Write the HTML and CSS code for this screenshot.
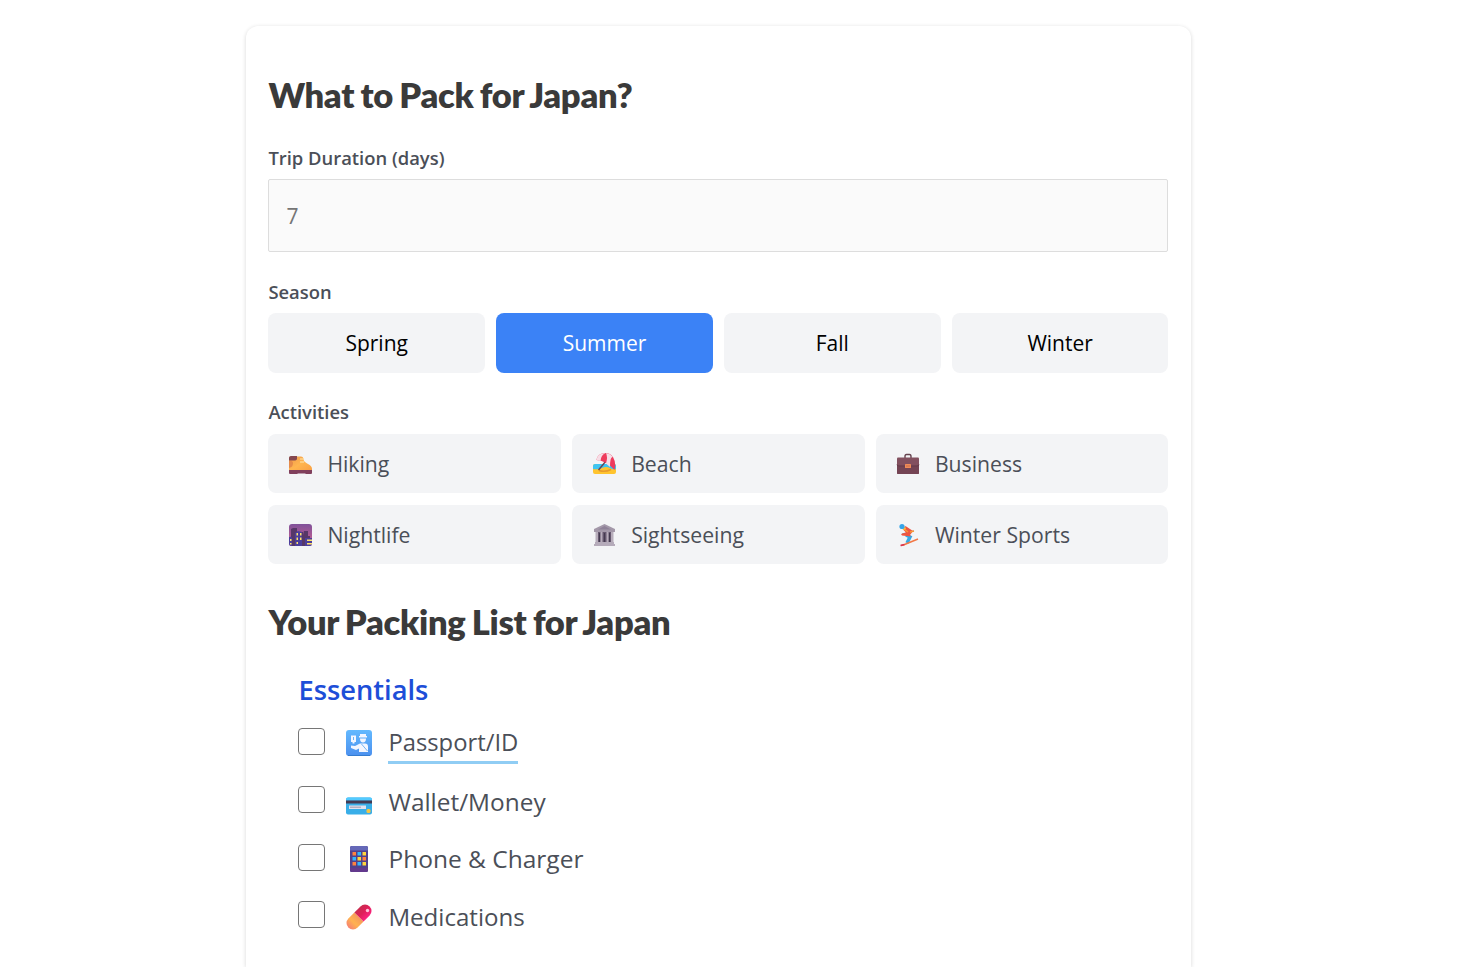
FILE: index.html
```html
<!DOCTYPE html>
<html lang="en">
<head>
  <meta charset="UTF-8">
  <title>What to Pack for Japan?</title>
  <link rel="stylesheet" href="styles.css">
</head>
<body>
  <div class="container">
    <h2>What to Pack for Japan?</h2>

    <label class="field-label" for="days">Trip Duration (days)</label>
    <input type="text" id="days" class="days-input" placeholder="7">

    <div class="field-label">Season</div>
    <div class="seasons">
      <button class="season-btn">Spring</button>
      <button class="season-btn active">Summer</button>
      <button class="season-btn">Fall</button>
      <button class="season-btn">Winter</button>
    </div>

    <div class="field-label label-activities">Activities</div>
    <div class="activities">
      <div class="activity">
        <svg class="icon" viewBox="0 0 24 24">
          <defs>
            <linearGradient id="boot" x1="0" y1="0" x2="1" y2="1"><stop offset="0" stop-color="#f09a4b"/><stop offset=".5" stop-color="#ffb54f"/><stop offset="1" stop-color="#f9a044"/></linearGradient>
          </defs>
          <path d="M1 6q0-1.500 2-1.500h10q2 0 2.500 2L16 9q2 2 4 3 4 2 4 5v2H1z" fill="url(#boot)"/>
          <path d="M1 9q4-1 4 2.500T1 16z" fill="#e58b4b"/>
          <path d="M1 6q0-2 2-2h6v2.500Q9 8.500 6 8.500H1z" fill="#84474f"/>
          <path d="M12 7h4M12 10h4" stroke="#ffe7ae" stroke-width="1.200"/>
          <path d="M1 18h23v3q0 1-1 1h-5l-1-.5h-7l-1 .5H2q-1 0-1-1z" fill="#803f5c"/>
        </svg>
        <span>Hiking</span>
      </div>
      <div class="activity">
        <svg class="icon" viewBox="0 0 24 24">
          <rect x="1" y="12" width="23" height="10" rx="2" fill="#ffc42f"/>
          <path d="M1 17v-3q0-2 2-2h19q2 0 2 2v3q-3 1-6-1-4-2-8 0-4 2-9 1" fill="#3fc4f1"/>
          <path d="M7 18.500q6 2 12-1" fill="none" stroke="#e89a2c" stroke-width="1.500"/>
          <path d="M6.500 18L14 9" stroke="#684554" stroke-width="1.400"/>
          <path d="M4.500 8Q5 3 10 1.500q7-2 11 3.500 3.500 6 1.500 13Q15 9 4.500 8z" fill="#ee3b5c"/>
          <path d="M4.500 8Q5 3 10 1.500q2-.5 3.500-.2Q9 3 8.500 9zM14 1.300q4 .2 7 3.700-3-1-3 10l-4-3.500Q16 5 14 1.300z" fill="#f6dde6"/>
        </svg>
        <span>Beach</span>
      </div>
      <div class="activity">
        <svg class="icon" viewBox="0 0 24 24">
          <path d="M9 6V4.500Q9 2.500 10.500 2.500h3Q15 2.500 15 4.500V6" fill="none" stroke="#65424e" stroke-width="1.400"/>
          <rect x="1" y="5.500" width="22" height="16.500" rx="1" fill="#82505f"/>
          <path d="M1 13q0 1.500 2 1.500h18q2 0 2-1.500v8q0 1-1 1H2q-1 0-1-1z" fill="#744454"/>
          <path d="M1 12.500q0 1.500 2 1.500h18q2 0 2-1.500" fill="none" stroke="#58313f" stroke-width=".8"/>
          <rect x="9" y="12" width="6" height="4" rx=".6" fill="#f18c58"/>
          <path d="M10 14h4" stroke="#c2664d" stroke-width=".8"/>
        </svg>
        <span>Business</span>
      </div>
      <div class="activity">
        <svg class="icon" viewBox="0 0 24 24">
          <defs>
            <linearGradient id="night" x1="0" y1="0" x2="0" y2="1"><stop offset="0" stop-color="#80519a"/><stop offset="1" stop-color="#d0628f"/></linearGradient>
          </defs>
          <rect x="1" y="1" width="23" height="22" rx="3" fill="url(#night)"/>
          <path d="M3 8V6l2-1h4v4h6v3l1-4h4v5h2v10H3z" fill="#563768"/>
          <path d="M1 14q3-1 3 1v8H3q-2 0-2-2zM7 10l3-2 4 1v14H7zM17 15h7v6q0 2-2 2h-5z" fill="#4b3e9c"/>
          <path d="M2 16h1.500v2H2zM2 20h1.500v1.500H2zM8.500 10H10v2.500H8.500zM12 10h1.500v2.500H12zM8.500 14.500H10V17H8.500zM12 14.500h1.500V17H12zM8.500 19H10v2H8.500zM19 16.500h5V18h-5zM19 20h5v1.500h-5z" fill="#ffe06b"/>
        </svg>
        <span>Nightlife</span>
      </div>
      <div class="activity">
        <svg class="icon" viewBox="0 0 24 24">
          <path d="M4 8h17v12H4z" fill="#66586f"/>
          <path d="M12.500 1L2 6v3h21V6z" fill="#a398a9"/>
          <path d="M12.500 3L6 6.500h13z" fill="#8e8198"/>
          <path d="M3.500 9H6v10H3.500zM8.500 9h2v10h-2zM14.500 9h2v10h-2zM19 9h2.500v10H19z" fill="#b7adbb"/>
          <path d="M12.500 10v9M7.500 10v9M17.500 10v9" stroke="#443b50"/>
          <path d="M3 19h19v2h1v2H2v-2h1z" fill="#b5abba"/>
        </svg>
        <span>Sightseeing</span>
      </div>
      <div class="activity">
        <svg class="icon" viewBox="0 0 24 24">
          <path d="M6 11l12-3" stroke="#4b6f91" stroke-width=".8"/>
          <path d="M10 12l4 2-3 6" fill="none" stroke="#35a9e7" stroke-width="3.500"/>
          <path d="M9.500 3l7.500 5-3 4 1 1.500-9-1-1-1.500 5-1.500-3-3z" fill="#ef5541"/>
          <path d="M8 6l4 3M14 9l4-1" stroke="#f99a36" stroke-width="1.500"/>
          <path d="M6 5l3-1.500 1 2.500-3 1z" fill="#ffba3d"/>
          <circle cx="6" cy="3.500" r="2.600" fill="#36a4e8"/>
          <path d="M5 22.500q2 0 6-2l11-4.500" fill="none" stroke="#f27846" stroke-width="1.500"/>
          <path d="M4.500 22.500l4-1" stroke="#d9304f" stroke-width="1.500"/>
        </svg>
        <span>Winter Sports</span>
      </div>
    </div>

    <h2 class="list-title">Your Packing List for Japan</h2>

    <div class="packing-list">
      <h3>Essentials</h3>
      <div class="item">
        <input type="checkbox">
        <svg class="item-icon" viewBox="0 0 26 26">
          <defs>
            <linearGradient id="passport" x1="0" y1="0" x2="0" y2="1"><stop offset="0" stop-color="#63b9ff"/><stop offset="1" stop-color="#4b90ee"/></linearGradient>
          </defs>
          <rect width="26" height="26" rx="3" fill="url(#passport)"/>
          <path d="M2 25.500h22" stroke="#347cd0" stroke-width="1"/>
          <path d="M5 5.500h5V12H8.500v1.500h-2V12H5z" fill="#f3f6ff"/>
          <path d="M7.500 7v3" stroke="#6eb4f3"/>
          <path d="M14 4h6v2h1v1.500h-8V6h1zM14 8.500h6q0 4-3 4t-3-4zM5 15.500l4 .5 5-2.500h5q3 0 3 3V22h-9v-3.500L10 20l-5-2z" fill="#f3f6ff"/>
          <path d="M15.500 14l6 7" stroke="#67adf2" stroke-width=".9"/>
        </svg>
        <a class="item-text passport">Passport/ID</a>
      </div>
      <div class="item">
        <input type="checkbox">
        <svg class="item-icon card-icon" viewBox="0 0 26 26">
          <rect y="8.500" width="26" height="17" rx="2" fill="#39aee8"/>
          <path d="M0 10.500q0-2 2-2h22q2 0 2 2v1H0z" fill="#53caff"/>
          <path d="M0 11.500h26v3H0z" fill="#443b54"/>
          <path d="M3 16.500h17v3.500H3z" fill="#e1e1ef"/>
          <path d="M4 18.200h11" stroke="#9592a5" stroke-width=".9"/>
          <rect x="20.500" y="20" width="4" height="4" rx="1.500" fill="#f5c543"/>
        </svg>
        <span class="item-text wallet">Wallet/Money</span>
      </div>
      <div class="item">
        <input type="checkbox">
        <svg class="item-icon" viewBox="0 0 26 26">
          <rect x="4" width="18" height="26" rx="1.500" fill="#51418c"/>
          <path d="M4 2q0-2 2-2h14q2 0 2 2v2.500H4z" fill="#6568b8"/>
          <path d="M4 22h18v2q0 2-2 2H6q-2 0-2-2z" fill="#63398d"/>
          <path d="M6.500 6H10v3.500H6.500zM16.500 11H20v3.500h-3.500zM6.500 16H10v3.500H6.500z" fill="#ff823f"/>
          <path d="M11.500 6H15v3.500h-3.500zM6.500 11H10v3.500H6.500zM11.500 16H15v3.500h-3.500z" fill="#32b7ff"/>
          <path d="M16.500 6H20v3.500h-3.500zM11.500 11H15v3.500h-3.500zM16.500 16H20v3.500h-3.500z" fill="#ffd53d"/>
        </svg>
        <span class="item-text phone">Phone &amp; Charger</span>
      </div>
      <div class="item">
        <input type="checkbox">
        <svg class="item-icon meds-icon" viewBox="0 0 26 26">
          <defs>
            <linearGradient id="pill" x1="0" y1="0" x2="1" y2="0"><stop offset="0" stop-color="#f78272"/><stop offset=".5" stop-color="#ffb251"/><stop offset="1" stop-color="#f59a5c"/></linearGradient>
            <linearGradient id="pilltop" x1="0" y1="0" x2="0" y2="1"><stop offset="0" stop-color="#c92b4e"/><stop offset=".5" stop-color="#e01f5b"/><stop offset="1" stop-color="#fb2380"/></linearGradient>
          </defs>
          <!-- capsule lies flat, then tilts -->
          <g transform="rotate(-45 13 13)">
            <path d="M13 6.500H4.500a6.500 6.500 0 0 0 0 13H13z" fill="url(#pill)"/>
            <path d="M13 6.500h8.500a6.500 6.500 0 0 1 0 13H13z" fill="url(#pilltop)"/>
          </g>
          <circle cx="21.500" cy="6.500" r="1.700" fill="#ffc4d9"/>
        </svg>
        <span class="item-text meds">Medications</span>
      </div>
    </div>
  </div>
</body>
</html>
```
FILE: styles.css
```css
* {
  box-sizing: border-box;
}

body {
  margin: 0;
  background: #fff;
  color: #4b4f58;
  font-family: "Open Sans", "Noto Sans", sans-serif;
  font-size: 21.2px;
}

.container {
  width: 945px;
  height: calc(100vh - 26px);
  margin: 26px 0 0 246px;
  padding: 49px 22.6px 0 22.4px;
  background: #fff;
  border-radius: 12px 12px 0 0;
  box-shadow: 0 1px 4px rgba(0,0,0,0.16);
}

h2 {
  margin: 0 0 29px;
  font-family: Lato, sans-serif;
  font-size: 34.5px;
  line-height: 40px;
  font-weight: 800;
  letter-spacing: -0.3px;
  word-spacing: -1.3px;
  color: #3a3a3a;
  white-space: nowrap;
}

.field-label {
  display: block;
  width: max-content;
  margin-bottom: 7px;
  font-size: 18.4px;
  line-height: 28px;
  font-weight: 600;
}

.days-input {
  display: block;
  width: 100%;
  height: 73px;
  margin-bottom: 26px;
  padding: 0 17px;
  border: 1px solid #ddd;
  border-radius: 2px;
  background: #fafafa;
  font-family: inherit;
  font-size: 21px;
}

.days-input::placeholder {
  color: #757575;
}

.seasons {
  display: grid;
  grid-template-columns: repeat(4, 1fr);
  gap: 11.25px;
  margin-bottom: 25px;
}

.season-btn {
  height: 60px;
  padding: 0;
  border: none;
  border-radius: 8px;
  background: #f3f4f6;
  color: #000;
  font-family: inherit;
  font-size: 21px;
}

.season-btn.active {
  background: #3b82f6;
  color: #fff;
}

.label-activities {
  margin-bottom: 8px;
}

.activities {
  display: grid;
  grid-template-columns: repeat(3, 1fr);
  gap: 12px 11.25px;
  margin-bottom: 38px;
}

.activity {
  display: flex;
  align-items: center;
  height: 59px;
  padding-left: 20px;
  border-radius: 8px;
  background: #f3f4f6;
  line-height: 30px;
}

.icon {
  width: 24px;
  height: 24px;
  margin-right: 15px;
}

.list-title {
  margin-bottom: 28px;
}

.packing-list {
  padding-left: 30px;
}

h3 {
  width: max-content;
  margin: 0 0 3px;
  font-size: 27.3px;
  line-height: 40px;
  font-weight: 600;
  color: #1d4ed8;
}

.item {
  display: flex;
  align-items: center;
  height: 57.7px;
  font-size: 24.1px;
}

.item input {
  appearance: none;
  width: 27px;
  height: 27px;
  margin: 0 21px 0 0;
  border: 1.5px solid #767676;
  border-radius: 4px;
  background: #fff;
}

.item-icon {
  width: 26px;
  height: 26px;
  margin: 3px 16px 0 0;
}

.card-icon,
.meds-icon {
  margin-top: 5px;
}

.item-text {
  margin-top: 3px;
  line-height: 34px;
}

.passport {
  margin-top: 6px;
  padding-bottom: 2px;
  border-bottom: 3px solid #90cdf4;
  font-size: 23.8px;
}

.wallet {
  margin-top: 5px;
  font-size: 24.4px;
}

.phone {
  font-size: 24.5px;
}

.meds {
  margin-top: 4px;
}
```
